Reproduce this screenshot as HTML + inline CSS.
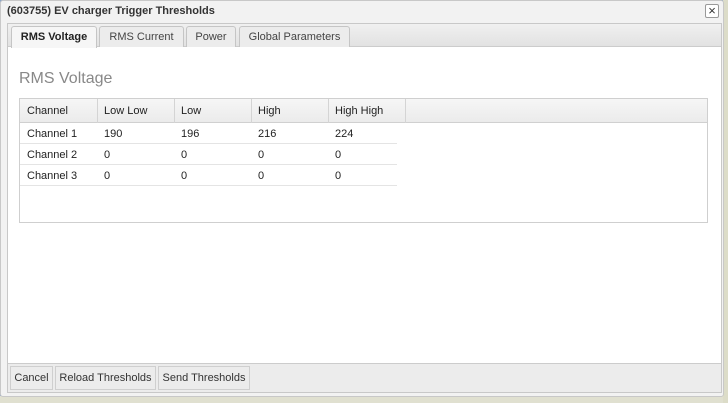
<!DOCTYPE html><html><head><style>
*{box-sizing:border-box;margin:0;padding:0}
body{width:728px;height:403px;overflow:hidden;font-family:"Liberation Sans",sans-serif;font-size:11px;color:#222;background:#8aa4c8;position:relative}
.abs{position:absolute}
.map{left:0;top:396px;width:728px;height:7px;background:#e0e0d0}
.mapr{left:723px;top:0;width:5px;height:403px;background:#dcdcc8}
.dlg{left:0;top:0;width:724px;height:397px;background:#f2f2f2;border:1px solid #c8c8c8;border-radius:3px}
.title{left:7px;top:5px;font-weight:bold;font-size:11px;color:#333}
.x{left:705px;top:4px;width:14px;height:14px;border:1px solid #999;border-radius:2px;background:#fff;font-size:13px;line-height:11px;text-align:center;color:#333}
.panel{left:7px;top:23px;width:715px;height:370px;border:1px solid #c8c8c8;background:#fff}
.tabbar{left:8px;top:24px;width:713px;height:23px;background:linear-gradient(#f0f0f0,#e2e2e2);border-bottom:1px solid #ccc}
.tab{top:26px;height:21px;border:1px solid #c5c5c5;border-bottom:none;background:#ececec;border-radius:3px 3px 0 0;text-align:center;line-height:20px;color:#444}
.tab.on{background:#f6f6f6;font-weight:bold;color:#222;height:22px}
h2{position:absolute;left:19px;top:70px;font-weight:normal;font-size:16px;color:#888}
.grid{left:19px;top:98px;width:689px;height:125px;border:1px solid #cfcfcf}
.hdr{left:20px;top:99px;width:687px;height:24px;background:linear-gradient(#f6f6f6,#ebebeb);border-bottom:1px solid #d0d0d0}
.c{position:absolute;padding-left:7px;line-height:22px}
.hc{top:99px;height:24px;line-height:24px;border-right:1px solid #d4d4d4}
.row{left:20px;width:377px;height:21px;border-bottom:1px solid #e4e4e4}
.bbar{left:8px;top:363px;width:713px;height:29px;background:#ececec;border-top:1px solid #ccc}
.btn{top:366px;height:24px;border:1px solid #cfcfcf;background:#ececec;line-height:23px;text-align:center;color:#333}
</style></head><body>
<div class="abs map"></div><div class="abs mapr"></div>
<div class="abs dlg"></div>
<div class="abs title">(603755) EV charger Trigger Thresholds</div>
<div class="abs x">×</div>
<div class="abs panel"></div>
<div class="abs tabbar"></div>
<div class="abs tab on" style="left:11px;width:86px">RMS Voltage</div>
<div class="abs tab" style="left:99px;width:85px">RMS Current</div>
<div class="abs tab" style="left:186px;width:50px">Power</div>
<div class="abs tab" style="left:239px;width:111px">Global Parameters</div>
<h2>RMS Voltage</h2>
<div class="abs grid"></div>
<div class="abs hdr"></div>
<div class="c hc" style="left:20px;width:78px">Channel</div>
<div class="c hc" style="left:97px;width:78px">Low Low</div>
<div class="c hc" style="left:174px;width:78px">Low</div>
<div class="c hc" style="left:251px;width:78px">High</div>
<div class="c hc" style="left:328px;width:78px">High High</div>
<div class="abs row" style="top:123px"></div>
<div class="abs row" style="top:144px"></div>
<div class="abs row" style="top:165px"></div>
<div class="c" style="left:20px;top:123px">Channel 1</div><div class="c" style="left:97px;top:123px">190</div><div class="c" style="left:174px;top:123px">196</div><div class="c" style="left:251px;top:123px">216</div><div class="c" style="left:328px;top:123px">224</div>
<div class="c" style="left:20px;top:144px">Channel 2</div><div class="c" style="left:97px;top:144px">0</div><div class="c" style="left:174px;top:144px">0</div><div class="c" style="left:251px;top:144px">0</div><div class="c" style="left:328px;top:144px">0</div>
<div class="c" style="left:20px;top:165px">Channel 3</div><div class="c" style="left:97px;top:165px">0</div><div class="c" style="left:174px;top:165px">0</div><div class="c" style="left:251px;top:165px">0</div><div class="c" style="left:328px;top:165px">0</div>
<div class="abs bbar"></div>
<div class="abs btn" style="left:10px;width:43px">Cancel</div>
<div class="abs btn" style="left:55px;width:101px">Reload Thresholds</div>
<div class="abs btn" style="left:158px;width:92px">Send Thresholds</div>
</body></html>
